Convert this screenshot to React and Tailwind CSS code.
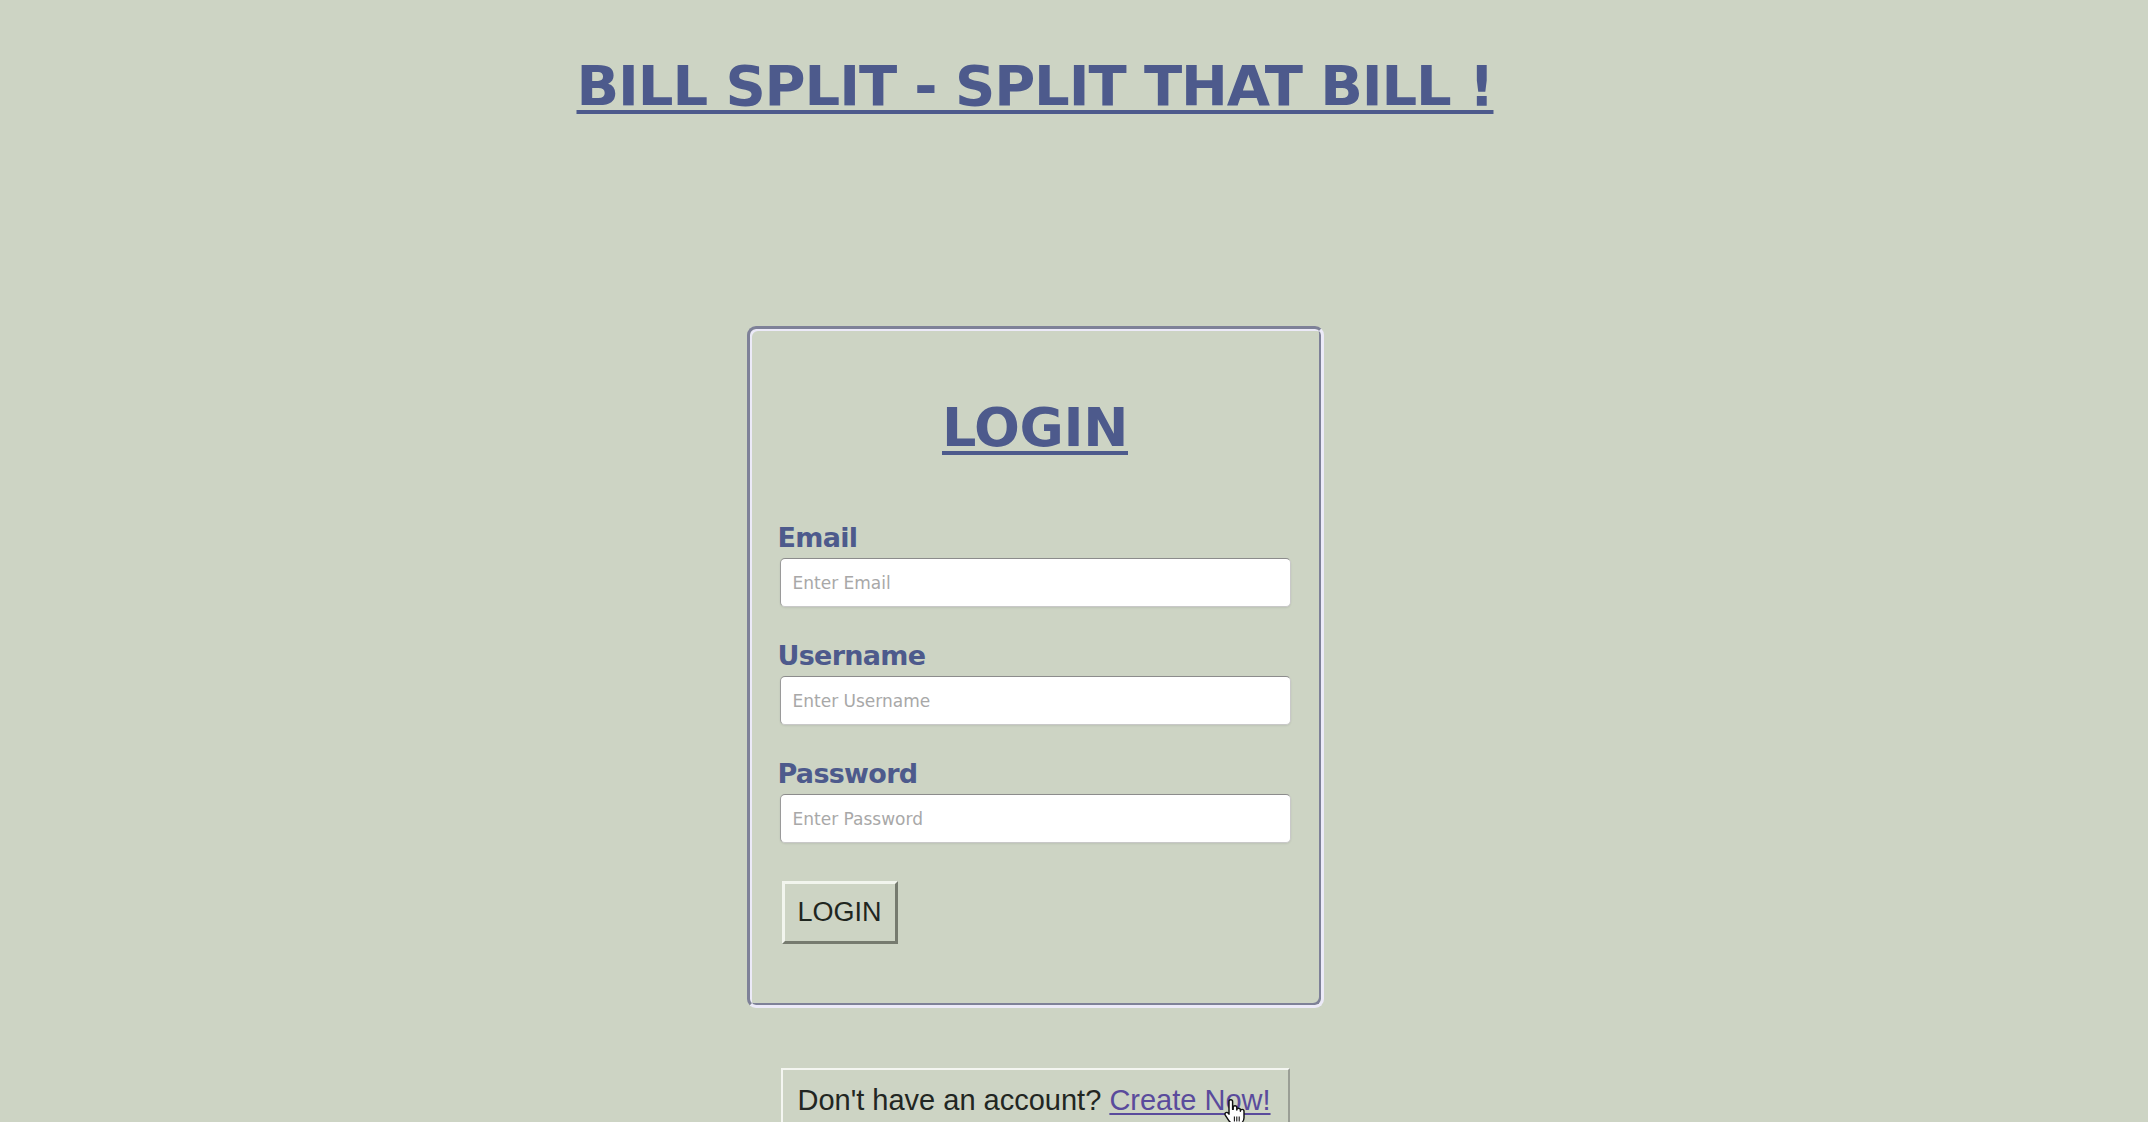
import React from 'react';

// Login page for the bill split app
export default function App() {
  return (
    <div className="min-h-screen w-full bg-[#cdd4c4] overflow-hidden">
      <div className="w-[2070px] flex flex-col items-center">
        <h1 className="mt-[54px] text-[56px] leading-[64px] font-bold text-[#4d5a8c] underline decoration-[4px] underline-offset-[5px] font-['DejaVu_Sans',sans-serif] tracking-[-1.1px]">
          BILL SPLIT - SPLIT THAT BILL !
        </h1>

        <form
          onSubmit={(e) => e.preventDefault()}
          className="mt-[208px] w-[577px] h-[682px] rounded-[9px] border-[3px] border-t-[#7e8198] border-l-[#7e8198] border-r-[#eceaf8] border-b-[#eceaf8] shadow-[inset_2px_2px_0_#eceaf8,inset_-2px_-2px_0_#7e8198] px-[30px] pt-[69px] pb-[60px] flex flex-col"
        >
          <h2 className="self-center text-[54px] leading-[60px] font-bold text-[#4d5a8c] underline decoration-[4px] underline-offset-[5px] font-['DejaVu_Sans',sans-serif] tracking-[-0.4px]">
            LOGIN
          </h2>

          <div className="mt-[64px] flex flex-col gap-[33px]">
            {[
              ['Email', 'Enter Email', 'email'],
              ['Username', 'Enter Username', 'text'],
              ['Password', 'Enter Password', 'password'],
            ].map(([label, placeholder, type]) => (
              <label key={label} className="flex flex-col gap-[4px]">
                <span className="-ml-[2px] text-[27px] leading-[32px] font-bold text-[#4d5a8c] font-['DejaVu_Sans',sans-serif] tracking-[-0.7px]">
                  {label}
                </span>
                <input
                  type={type}
                  placeholder={placeholder}
                  className="h-[49px] w-full rounded-[5px] bg-white border border-[#c8c8c8] border-t-[#8c8c8c] border-l-[#9a9a9a] shadow-[0_1px_2px_rgba(0,0,0,0.08)] px-[12px] text-[17px] text-[#333] placeholder:text-[#a8a8a8] font-['DejaVu_Sans',sans-serif] outline-none"
                />
              </label>
            ))}
          </div>

          <button
            type="submit"
            className="mt-[38px] ml-[2px] self-start w-[116px] h-[63px] bg-[#cdd4c4] border-[3px] border-t-[#f2f5ee] border-l-[#f2f5ee] border-r-[#767b6f] border-b-[#767b6f] text-[27px] text-[#1f261f] font-['Liberation_Sans',Arial,sans-serif]"
          >
            LOGIN
          </button>
        </form>

        <div className="relative mt-[60px] w-[509px] h-[80px] border-2 border-t-[#f4f6f1] border-l-[#f4f6f1] border-r-[#9a9e95] border-b-[#9a9e95] px-[15px] pt-[14px] text-[29px] leading-[32px] text-[#222622] font-['Liberation_Sans',Arial,sans-serif]">
          Don't have an account?{' '}
          <a href="#" className="text-[#5a4b9c] underline underline-offset-[3px]">
            Create Now!
          </a>
          <svg
            className="absolute left-[440px] top-[28px] w-[24px] h-[30px]"
            viewBox="0 0 20 24"
          >
            <path
              d="M5 2.5a1.5 1.5 0 0 1 3 0V9h.5V7.5a1.5 1.5 0 0 1 3 0V9.5a1.5 1.5 0 0 1 3 0v1a1.5 1.5 0 0 1 3 0V16c0 3-2 5-5 5H9c-2 0-3-1-4-2.5L2 14a1.5 1.5 0 0 1 2.3-2L5 13Z"
              fill="#fff"
              stroke="#111"
              strokeWidth="1.2"
              strokeLinejoin="round"
            />
            <path d="M9.5 15v4M11.5 15v4M13.5 15v4" stroke="#111" strokeWidth="0.9" />
          </svg>
        </div>
      </div>
    </div>
  );
}
